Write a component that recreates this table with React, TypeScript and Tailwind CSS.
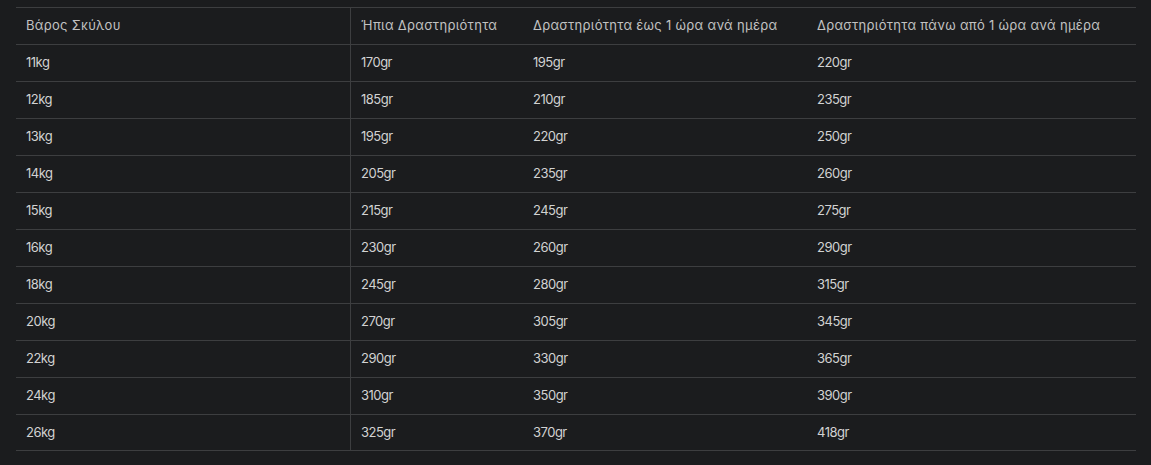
import React from "react";

const rows: [string, string, string, string][] = [
  ["11kg", "170gr", "195gr", "220gr"],
  ["12kg", "185gr", "210gr", "235gr"],
  ["13kg", "195gr", "220gr", "250gr"],
  ["14kg", "205gr", "235gr", "260gr"],
  ["15kg", "215gr", "245gr", "275gr"],
  ["16kg", "230gr", "260gr", "290gr"],
  ["18kg", "245gr", "280gr", "315gr"],
  ["20kg", "270gr", "305gr", "345gr"],
  ["22kg", "290gr", "330gr", "365gr"],
  ["24kg", "310gr", "350gr", "390gr"],
  ["26kg", "325gr", "370gr", "418gr"],
];

const header: [string, string, string, string] = [
  "Βάρος Σκύλου",
  "Ήπια Δραστηριότητα",
  "Δραστηριότητα έως 1 ώρα ανά ημέρα",
  "Δραστηριότητα πάνω από 1 ώρα ανά ημέρα",
];

function Row({ cells, isHeader, last }: { cells: string[]; isHeader?: boolean; last?: boolean }) {
  return (
    <div
      className={`grid grid-cols-[335px_171px_284px_330px] h-[37px] border-t border-[#3d3e40] ${last ? "border-b" : ""} ${isHeader ? "text-[#c2c2c2] tracking-[0.3px]" : "text-[#d2d2d2] tracking-[-0.5px]"}`}
    >
      <div className="flex items-center pl-[10px] border-r border-[#3d3e40]">{cells[0]}</div>
      <div className="flex items-center pl-[10px]">{cells[1]}</div>
      <div className="flex items-center pl-[11px]">{cells[2]}</div>
      <div className="flex items-center pl-[11px]">{cells[3]}</div>
    </div>
  );
}

export default function App() {
  return (
    <div
      className="w-[1151px] h-[465px] bg-[#1b1c1e] pt-[7px] pl-[16px] text-[13px]"
      style={{ fontFamily: "Inter, 'Noto Sans', sans-serif" }}
    >
      <div className="w-[1120px]">
        <Row cells={header} isHeader />
        {rows.map((r, i) => (
          <Row key={r[0]} cells={r} last={i === rows.length - 1} />
        ))}
      </div>
    </div>
  );
}
